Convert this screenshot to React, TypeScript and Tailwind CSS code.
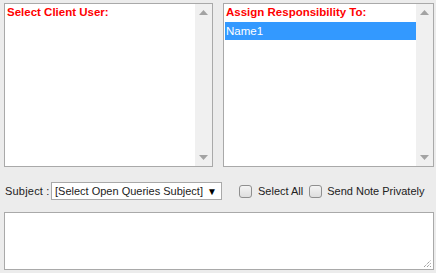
import React from "react";

function ScrollBar() {
  return (
    <div className="w-[17px] h-full bg-[#f0f0f0] flex flex-col items-center justify-between py-[6px]">
      <svg width="9" height="5" viewBox="0 0 9 5"><path d="M0 5 L4.5 0 L9 5 Z" fill="#a3a3a3" /></svg>
      <svg width="9" height="5" viewBox="0 0 9 5"><path d="M0 0 L4.5 5 L9 0 Z" fill="#a3a3a3" /></svg>
    </div>
  );
}

function CheckBox() {
  return (
    <div className="w-[13px] h-[13px] shrink-0 rounded-[3px] border border-[#8f8f8f] bg-gradient-to-b from-[#f4f4f4] to-[#dedede]" />
  );
}

export default function App() {
  return (
    <div
      className="w-[436px] h-[273px] bg-[#ececec] flex flex-col text-[11px] text-[#222] whitespace-nowrap"
      style={{ fontFamily: "'Liberation Sans', Arial, sans-serif" }}
    >
      <div className="flex pt-[3px] pl-[4px] gap-[10px] h-[167px]">
        <div className="w-[209px] h-[164px] border border-[#a9a9a9] bg-white flex">
          <div className="flex-1 pl-[2px] pt-[1px]">
            <div className="text-[#ff0000] font-bold text-[11.5px] leading-[14px]">Select Client User:</div>
          </div>
          <ScrollBar />
        </div>
        <div className="w-[211px] h-[164px] border border-[#a9a9a9] bg-white flex">
          <div className="flex-1 pl-[1px] pt-[1px] flex flex-col">
            <div className="text-[#ff0000] font-bold text-[11.5px] leading-[14px] pl-[1px] h-[17px]">Assign Responsibility To:</div>
            <div className="bg-[#3399ff] text-white text-[11.5px] leading-[18px] h-[18px] pl-[1px]">Name1</div>
          </div>
          <ScrollBar />
        </div>
      </div>
      <div className="flex items-center h-[18px] mt-[15px] pl-[5px] text-[11px]">
        <span className="w-[40px] shrink-0 tracking-[0.2px]">Subject :</span>
        <div className="ml-[6px] w-[171px] shrink-0 h-[18px] border border-[#a9a9a9] bg-white flex items-center justify-between pl-[3px] pr-[4px]">
          <span>[Select Open Queries Subject]</span>
          <span className="text-[10px] text-black">▼</span>
        </div>
        <div className="ml-[17px] flex items-center gap-[6px]">
          <CheckBox />
          <span>Select All</span>
        </div>
        <div className="ml-[6px] flex items-center gap-[5px]">
          <CheckBox />
          <span>Send Note Privately</span>
        </div>
      </div>
      <div className="mt-[12px] ml-[4px] w-[430px] h-[58px] border border-[#a9a9a9] bg-white relative">
        <svg className="absolute right-[1px] bottom-[1px]" width="9" height="9" viewBox="0 0 9 9">
          <path d="M1 8 L8 1 M4 8 L8 4 M7 8 L8 7" stroke="#777" strokeWidth="1" strokeDasharray="1 1" />
        </svg>
      </div>
    </div>
  );
}
